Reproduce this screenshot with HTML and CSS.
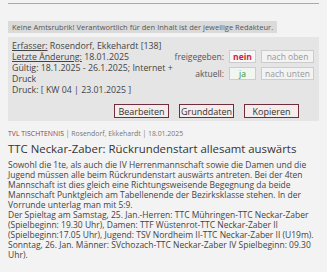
FILE: index.html
```html
<!DOCTYPE html>
<html lang="de">
<head>
  <meta charset="UTF-8" />
  <title>TTC Neckar-Zaber</title>
  <link rel="stylesheet" href="styles.css">
</head>
<body>

  <hr class="top-line">

  <div class="notice">Keine Amtsrubrik! Verantwortlich für den Inhalt ist der jeweilige Redakteur.</div>

  <div class="info-box">
    <div class="info-row">
      <div class="info-left">
        <div><u>Erfasser:</u> Rosendorf, Ekkehardt [138]</div>
        <div><u>Letzte Änderung:</u> 18.01.2025</div>
        <div>Gültig: 18.1.2025 - 26.1.2025; Internet + Druck</div>
        <div>Druck: [ KW 04 | 23.01.2025 ]</div>
      </div>
      <div class="info-right">
        <span class="label">freigegeben:</span>
        <span class="tag tag-no">nein</span>
        <span class="tag tag-move">nach oben</span>
        <span class="label">aktuell:</span>
        <span class="tag tag-yes">ja</span>
        <span class="tag tag-move">nach unten</span>
      </div>
    </div>
    <div class="actions">
      <button class="btn">Bearbeiten</button>
      <button class="btn">Grunddaten</button>
      <button class="btn">Kopieren</button>
    </div>
  </div>

  <div class="meta"><span class="rubric">TVL TISCHTENNIS</span> | Rosendorf, Ekkehardt | 18.01.2025</div>

  <h1 class="title">TTC Neckar-Zaber: Rückrundenstart allesamt auswärts</h1>

  <p class="text">Sowohl die 1te, als auch die IV Herrenmannschaft sowie die Damen und die Jugend müssen alle beim Rückrundenstart auswärts antreten. Bei der 4ten Mannschaft ist dies gleich eine Richtungsweisende Begegnung da beide Mannschaft Punktgleich am Tabellenende der Bezirksklasse stehen. In der Vorrunde unterlag man mit 5:9.<br>Der Spieltag am Samstag, 25. Jan.-Herren: TTC Mühringen-TTC Neckar-Zaber (Spielbeginn: 19.30 Uhr), Damen: TTF Wüstenrot-TTC Neckar-Zaber II (Spielbeginn:17.05 Uhr), Jugend: TSV Nordheim II-TTC Neckar-Zaber II (U19m). Sonntag, 26. Jan. Männer: SVchozach-TTC Neckar-Zaber IV Spielbeginn: 09.30 Uhr).</p>

</body>
</html>
```

FILE: styles.css
```css
body {
  margin: 0;
  padding: 3px 8px;
  font-family: "Open Sans", Arial, sans-serif;
  background-color: #f3f3f3;
  color: #444;
}

.top-line {
  margin: 0 0 9px 0;
  border: none;
  border-top: 1px solid #aaa;
}

.notice {
  display: inline-block;
  background-color: #dadada;
  color: #555;
  font-size: 7.5px;
  line-height: 10px;
  padding: 1px 4px;
  margin-bottom: 4px;
}

.info-box {
  background-color: #e5e5e5;
  padding: 4px 5px 3px 4px;
  font-size: 8.8px;
  line-height: 11px;
}

.info-row {
  display: flex;
}

.info-left {
  flex: 1;
}

.info-right {
  flex: none;
  display: grid;
  grid-template-columns: auto 27px 53px;
  column-gap: 5px;
  row-gap: 4px;
  align-items: center;
  margin-top: 9px;
  align-self: flex-start;
}

.label {
  text-align: right;
  color: #555;
  font-size: 8.5px;
}

.tag {
  display: block;
  text-align: center;
  border: 1px solid #ccc;
  background-color: #f7f7f7;
  line-height: 11px;
  font-size: 8.5px;
}

.tag-no {
  color: #d0203c;
  font-weight: bold;
}

.tag-yes {
  color: #3d8f3d;
  background-color: #f1f6f0;
}

.tag-move {
  color: #999;
  background-color: #f3f3f3;
}

.actions {
  display: flex;
  justify-content: flex-end;
  gap: 10px;
  padding-right: 15px;
  margin-top: 8px;
}

.btn {
  width: 55px;
  height: 14px;
  padding: 0;
  font-family: "Open Sans", Arial, sans-serif;
  font-size: 9px;
  line-height: 11px;
  color: #333;
  background-color: #f6ecec;
  border: 1px solid #6e2e3e;
}

.meta {
  margin-top: 8px;
  font-size: 6.9px;
  color: #777;
}

.rubric {
  color: #a03a40;
}

.title {
  margin: 3px 0 4px 0;
  font-size: 11.4px;
  font-weight: normal;
  color: #333;
}

.text {
  margin: 0;
  font-size: 8.5px;
  line-height: 10px;
  color: #444;
}
```
